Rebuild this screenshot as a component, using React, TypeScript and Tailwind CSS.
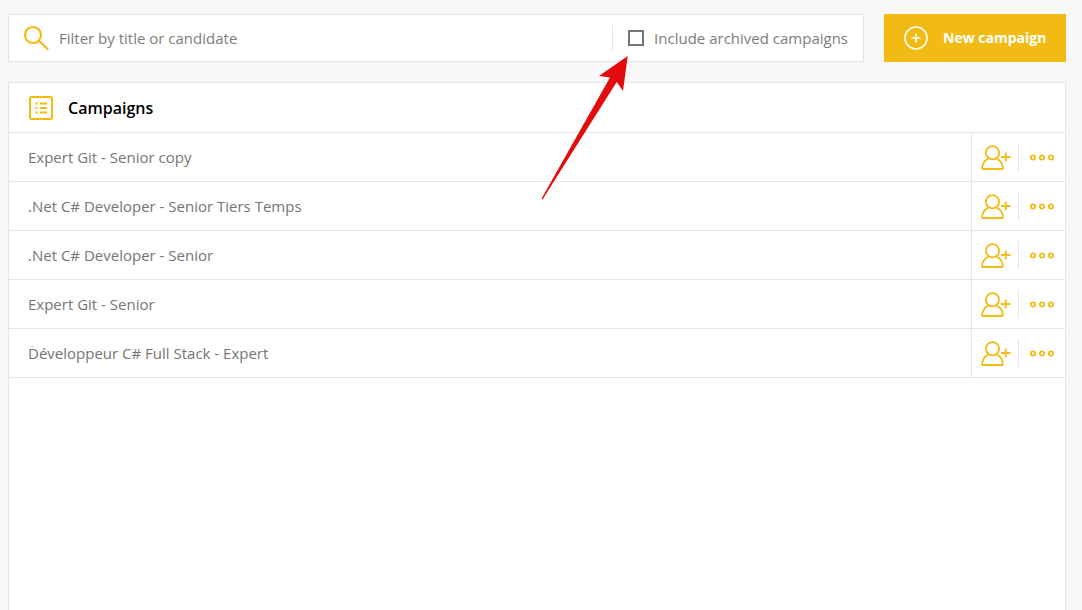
const campaigns = [
  'Expert Git - Senior copy',
  '.Net C# Developer - Senior Tiers Temps',
  '.Net C# Developer - Senior',
  'Expert Git - Senior',
  'Développeur C# Full Stack - Expert',
]

function SearchIcon() {
  return (
    <svg width="26" height="26" viewBox="0 0 26 26" fill="none" stroke="#f2bb13" strokeWidth="2.2">
      <circle cx="10" cy="10" r="8" />
      <path d="M15.8 15.8 24.5 24" strokeLinecap="round" />
    </svg>
  )
}

function ListIcon() {
  return (
    <svg width="24" height="24" viewBox="0 0 24 24" fill="none" stroke="#f2bb13" strokeWidth="2">
      <rect x="1" y="1" width="22" height="22" rx="1.5" />
      <path d="M6.5 7.5h2M11 7.5h7M6.5 12h2M11 12h7M6.5 16.5h2M11 16.5h7" />
    </svg>
  )
}

function PlusCircleIcon() {
  return (
    <svg width="24" height="24" viewBox="0 0 24 24" fill="none" stroke="#fff" strokeWidth="1.6">
      <circle cx="12" cy="12" r="11" />
      <path d="M12 7.5v9M7.5 12h9" />
    </svg>
  )
}

function AddUserIcon() {
  return (
    <svg width="30" height="25" viewBox="0 0 30 25" fill="none" stroke="#f2bb13" strokeWidth="1.8">
      <circle cx="11.500" cy="7.700" r="6.600" />
      <path d="M1 24c0-5.500 3.500-9 6.500-10.500M22 24c0-5.500-3.500-9-6.500-10.500M1 24h21" />
      <path d="M20 12h9.500M24.700 7.500v9" />
    </svg>
  )
}

function DotsIcon() {
  return (
    <svg width="24" height="7" viewBox="0 0 24 7" fill="none" stroke="#f2bb13" strokeWidth="1.800">
      <circle cx="3" cy="3.500" r="2.100" />
      <circle cx="12" cy="3.500" r="2.100" />
      <circle cx="21" cy="3.500" r="2.100" />
    </svg>
  )
}

export default function App() {
  return (
    <div className="relative h-[610px] overflow-hidden bg-[#f8f8f8] px-2 pt-[14px] font-['Open_Sans',sans-serif]">
      <div className="mr-[8px] flex h-[48px] gap-5">
        <div className="flex flex-1 items-center border border-[#e5e5e5] bg-white">
          <div className="ml-[14px] flex-none">
            <SearchIcon />
          </div>
          <span className="ml-[10px] flex-1 text-[15px] text-[#7d7d7d]">Filter by title or candidate</span>
          <div className="h-[26px] w-px bg-[#e5e5e5]" />
          <div className="ml-[15px] h-4 w-4 border-2 border-[#777]" />
          <span className="ml-[10px] mr-[15px] text-[15px] text-[#7d7d7d]">Include archived campaigns</span>
        </div>
        <button className="flex w-[182px] items-center bg-[#f2bb13] pl-[20px] text-sm font-bold text-white">
          <PlusCircleIcon />
          <span className="ml-[15px]">New campaign</span>
        </button>
      </div>

      <div className="mr-[8px] mt-5 h-[600px] border border-[#e5e5e5] bg-white">
        <div className="flex h-[50px] items-center border-b border-[#e5e5e5] pl-5">
          <ListIcon />
          <span className="ml-[15px] text-base font-semibold text-black">Campaigns</span>
        </div>
        {campaigns.map((name) => (
          <div key={name} className="flex h-[49px] items-center border-b border-[#e5e5e5]">
            <span className="flex-1 pl-[19px] text-[15px] text-[#757575]">{name}</span>
            <div className="flex h-full w-[94px] items-center border-l border-[#e5e5e5]">
              <div className="ml-[9px]">
                <AddUserIcon />
              </div>
              <div className="ml-[7px] h-[28px] w-px bg-[#e5e5e5]" />
              <div className="ml-[11px] flex">
                <DotsIcon />
              </div>
            </div>
          </div>
        ))}
      </div>

      <svg className="absolute left-0 top-0" width="1082" height="610" fill="none">
        <path d="M627.700 56 599 76 610 77.500 541.600 198.500 542.500 199.500 616.700 82 623 91Z" fill="#e30b0b" />
      </svg>
    </div>
  )
}
